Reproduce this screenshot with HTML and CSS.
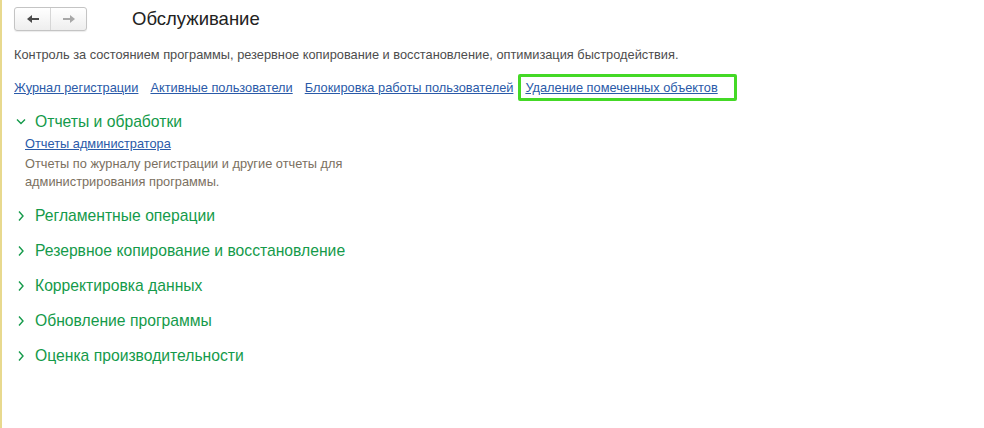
FILE: index.html
```html
<!DOCTYPE html>
<html lang="ru">
<head>
    <meta charset="utf-8">
    <title>Обслуживание</title>
    <link rel="stylesheet" href="styles.css">
</head>
<body>
    <div class="page">

        <!-- Title bar -->
        <div class="head">
            <div class="navgroup">
                <span class="navbtn">
                    <svg width="14" height="10" viewBox="0 0 14 10"><path d="M1 5 L6 1 L6 4 L13 4 L13 6 L6 6 L6 9 Z" fill="#4a4a4a"/></svg>
                </span>
                <span class="navbtn">
                    <svg width="14" height="10" viewBox="0 0 14 10"><path d="M13 5 L8 1 L8 4 L1 4 L1 6 L8 6 L8 9 Z" fill="#a8a8a8"/></svg>
                </span>
            </div>
            <h1>Обслуживание</h1>
        </div>

        <p class="intro">Контроль за состоянием программы, резервное копирование и восстановление, оптимизация быстродействия.</p>

        <!-- Quick links -->
        <div class="links">
            <a href="#">Журнал регистрации</a>
            <a href="#">Активные пользователи</a>
            <a href="#">Блокировка работы пользователей</a>
            <span class="marked"><a href="#">Удаление помеченных объектов</a></span>
        </div>

        <!-- Groups -->
        <div class="group open">
            <div class="group-title">
                <svg class="chev" width="10" height="12" viewBox="0 0 10 12"><path d="M1 3.5 L5 7.5 L9 3.5" fill="none" stroke="#149a4a" stroke-width="1.4"/></svg>
                Отчеты и обработки
            </div>
            <div class="group-body">
                <a href="#">Отчеты администратора</a>
                <p>Отчеты по журналу регистрации и другие отчеты для<br>администрирования программы.</p>
            </div>
        </div>

        <div class="group">
            <div class="group-title">
                <svg class="chev" width="10" height="12" viewBox="0 0 10 12"><path d="M3 1.5 L7 6 L3 10.5" fill="none" stroke="#149a4a" stroke-width="1.4"/></svg>
                Регламентные операции
            </div>
        </div>
        <div class="group">
            <div class="group-title">
                <svg class="chev" width="10" height="12" viewBox="0 0 10 12"><path d="M3 1.5 L7 6 L3 10.5" fill="none" stroke="#149a4a" stroke-width="1.4"/></svg>
                Резервное копирование и восстановление
            </div>
        </div>
        <div class="group">
            <div class="group-title">
                <svg class="chev" width="10" height="12" viewBox="0 0 10 12"><path d="M3 1.5 L7 6 L3 10.5" fill="none" stroke="#149a4a" stroke-width="1.4"/></svg>
                Корректировка данных
            </div>
        </div>
        <div class="group">
            <div class="group-title">
                <svg class="chev" width="10" height="12" viewBox="0 0 10 12"><path d="M3 1.5 L7 6 L3 10.5" fill="none" stroke="#149a4a" stroke-width="1.4"/></svg>
                Обновление программы
            </div>
        </div>
        <div class="group">
            <div class="group-title">
                <svg class="chev" width="10" height="12" viewBox="0 0 10 12"><path d="M3 1.5 L7 6 L3 10.5" fill="none" stroke="#149a4a" stroke-width="1.4"/></svg>
                Оценка производительности
            </div>
        </div>

    </div>
</body>
</html>
```

FILE: styles.css
```css
html, body {
    margin: 0;
    height: 100%;
    background: #fff;
}

body {
    font-family: "Liberation Sans", Arial, sans-serif;
    font-size: 12.8px;
    color: #4d4d4d;
}

.page {
    min-height: 100%;
    box-sizing: border-box;
    border-left: 2px solid #e8d98e;
    padding: 7px 0 0 12px;
}

/* Title bar */
.head {
    display: flex;
    align-items: center;
    height: 24px;
}

.navgroup {
    display: flex;
    width: 71px;
    height: 22px;
    border: 1px solid #c4c4c4;
    border-radius: 3px;
    background: linear-gradient(#ffffff, #eeeeee);
    box-shadow: 0 1px 1px rgba(0, 0, 0, 0.08);
}

.navbtn {
    flex: 1;
    display: flex;
    align-items: center;
    justify-content: center;
}

.navbtn + .navbtn {
    border-left: 1px solid #d6d6d6;
}

h1 {
    margin: 0 0 0 45px;
    font-size: 18.5px;
    font-weight: normal;
    color: #222;
}

.intro {
    margin: 16px 0 0 0;
    line-height: 15px;
    color: #4d4d4d;
}

/* Quick links */
a {
    color: #2a5aa8;
    text-decoration: underline;
}

.links {
    display: flex;
    align-items: center;
    margin-top: 11px;
    height: 28px;
}

.links a {
    margin-right: 12px;
}

.marked {
    margin-left: -7px;
    padding: 3px 16px 3px 4px;
    border: 3px solid #44d926;
    border-radius: 2px;
}

.marked a {
    margin-right: 0;
}

/* Groups */
.group-title {
    display: flex;
    align-items: center;
    height: 35px;
    font-size: 15.7px;
    color: #149a4a;
}

.chev {
    margin: 0 9px 0 2px;
}

.group.open .group-title {
    height: 24px;
    margin-top: 9px;
}

.group-body {
    padding: 2px 0 7px 11px;
}

.group-body p {
    margin: 4px 0 0 0;
    line-height: 18px;
    color: #7b705f;
}
```
